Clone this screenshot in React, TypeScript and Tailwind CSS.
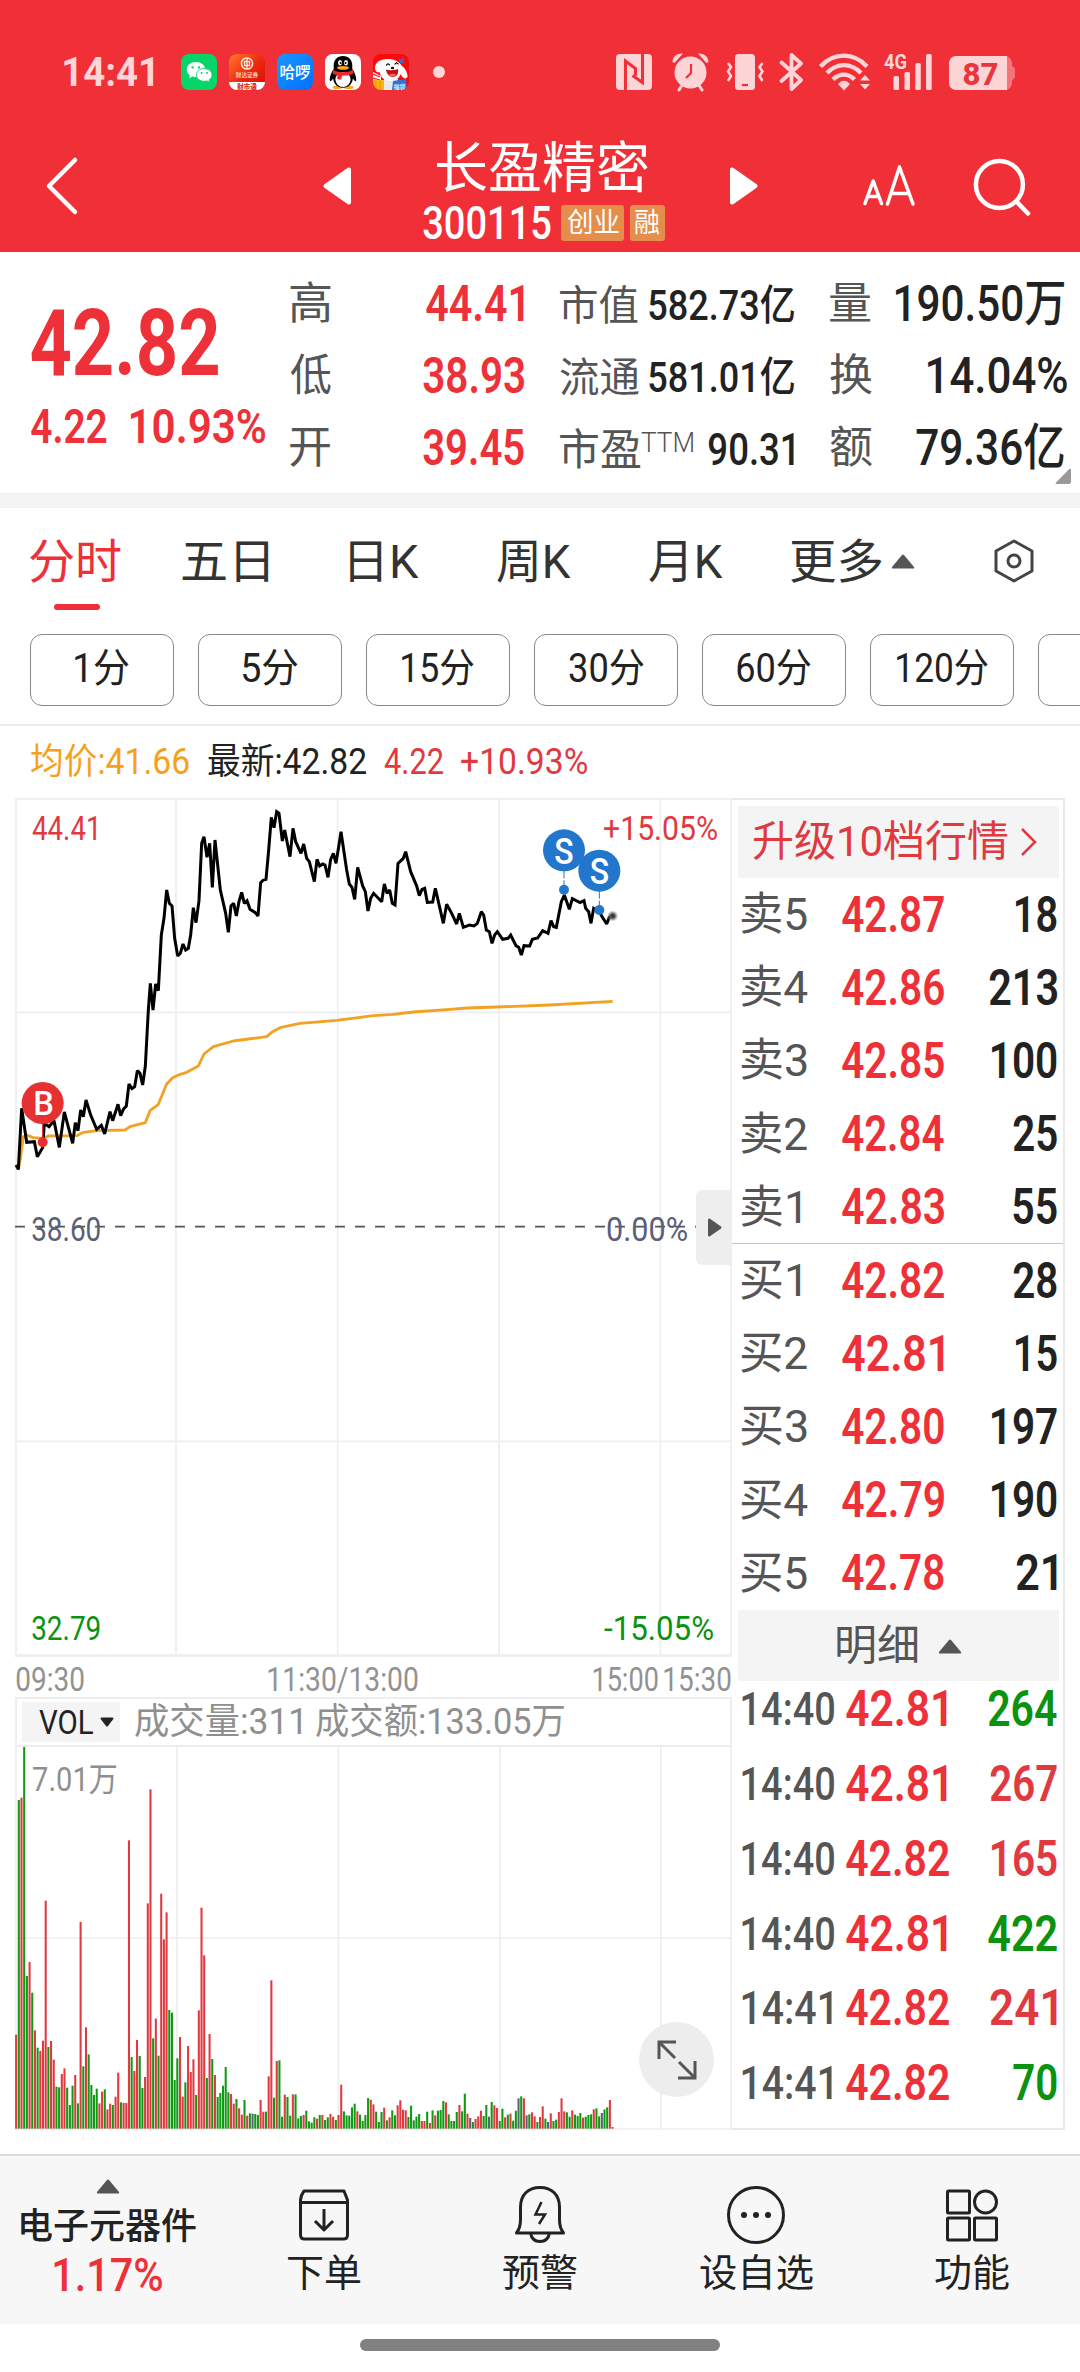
import { useLayoutEffect, useRef, useState, type ReactNode } from 'react'
import clsx from 'clsx'

interface FitProps {
  w: number
  children: string
  className?: string
}

// Condenses a run of text so that its visible glyphs span exactly `w` pixels.
function Fit({ w, children, className }: FitProps) {
  const ref = useRef<HTMLSpanElement>(null)
  const [transform, setTransform] = useState('none')

  useLayoutEffect(() => {
    const el = ref.current
    const ctx = document.createElement('canvas').getContext('2d')
    if (!el || !ctx) return
    const style = getComputedStyle(el)
    ctx.font = `${style.fontWeight} ${style.fontSize} ${style.fontFamily}`
    const m = ctx.measureText(children)
    const left = -m.actualBoundingBoxLeft
    const scale = w / (m.actualBoundingBoxRight - left)
    setTransform(`translateX(${-left * scale}px) scaleX(${scale})`)
  }, [w, children])

  return (
    <span className={clsx('block shrink-0 whitespace-nowrap leading-none', className)} style={{ width: w }}>
      <span ref={ref} className="inline-block origin-left" style={{ transform }}>
        {children}
      </span>
    </span>
  )
}

const PRICE =
  '48,1155 55,1168 65,985 80,1087 103,1085 112,1130 128,1103 133,1030 147,1040 162,1022 178,1102 193,996 218,1090 226,1028 234,1052 242,990 250,1010 258,960 272,1005 290,1048 304,1036 314,1062 330,995 338,1022 354,973 362,1007 370,988 379,978 387,912 396,926 404,920 412,872 420,880 428,915 436,858 445,690 451,610 459,690 467,612 475,632 484,465 492,415 500,330 508,370 516,378 524,475 533,528 541,520 549,492 557,510 565,505 572,465 580,383 588,428 597,362 605,190 612,170 621,232 629,190 637,322 645,180 661,330 677,400 685,457 693,378 701,370 709,408 717,365 725,337 733,370 741,362 750,388 766,398 774,408 782,308 790,300 798,298 806,210 814,112 822,143 830,95 837,100 847,183 854,150 870,230 879,145 887,185 903,220 911,192 920,235 928,245 943,305 951,238 959,258 968,252 975,255 984,292 992,238 1000,220 1008,250 1016,200 1023,155 1040,270 1048,312 1056,322 1064,358 1073,262 1088,318 1096,335 1104,393 1112,355 1121,340 1145,365 1153,312 1161,340 1169,330 1177,370 1185,375 1194,250 1210,235 1217,215 1232,275 1250,318 1258,347 1266,328 1274,325 1282,367 1298,366 1306,325 1330,430 1340,373 1355,400 1370,432 1378,400 1390,442 1408,435 1422,438 1432,430 1444,395 1451,405 1459,450 1468,455 1476,490 1484,465 1492,455 1508,478 1524,475 1532,465 1548,497 1556,502 1564,525 1572,497 1589,498 1597,478 1613,474 1628,452 1644,460 1653,422 1661,440 1669,442 1684,365 1693,345 1708,388 1717,356 1740,368 1752,362 1757,385 1766,395 1773,430 1781,385 1798,395 1805,408 1820,432 1828,412 1838,406'

const AVERAGE =
  '55,1170 62,1130 70,1070 80,1065 100,1073 130,1075 145,1068 230,1067 250,1057 290,1052 375,1050 390,1040 436,1028 450,992 475,973 500,912 518,893 540,883 560,877 595,858 612,822 640,800 700,783 800,770 815,757 840,743 900,730 1010,721 1080,712 1120,707 1180,703 1240,696 1350,688 1400,684 1490,681 1650,675 1838,664'

// One entry a minute: direction (r up, g down, k flat) and the bar's top edge.
const VOLUME =
  'r944 g240 r233 g80 g768 r726 g818 r931 g983 r993 r962 r542 g981 r963 r1019 g1100 g1102 r1062 r1045 g1103 g1155 g1097 r1065 g1150 r606 g1039 r922 g1003 g1095 g1125 g1106 r1150 r1115 g1108 r1168 r1151 g1155 r1130 r1058 g1147 r1149 r1149 r361 g1011 r1053 r960 g1008 g1104 r1071 r550 r208 g955 r896 g1007 r521 r658 r577 g870 g878 g1080 g1015 r951 r1130 g1087 r978 r1056 r1018 g1125 r871 r563 r706 g1074 r942 g1017 r1065 g1131 g1119 g1097 g1041 g1117 r1122 r1151 g1137 r1165 r1184 g1140 r1187 g1180 k1181 g1182 g1185 r1140 r1175 g1175 r1069 r781 g1133 r1023 g1021 g1190 r1124 g1131 g1187 r1123 g1123 g1195 g1188 r1185 g1172 g1204 g1208 g1192 r1196 g1185 r1185 g1200 g1192 r1182 r1190 g1200 r1185 r1094 g1174 g1186 g1187 g1162 g1151 r1174 g1184 g1203 g1185 g1134 r1139 r1153 g1175 g1206 g1176 r1163 g1201 r1192 g1171 g1186 r1156 r1141 r1169 r1171 g1191 g1157 g1201 g1190 g1182 r1203 r1203 g1175 r1209 g1171 r1186 g1172 g1170 g1143 r1147 g1183 g1203 g1203 g1176 r1155 g1174 g1121 r1181 k1194 g1206 r1197 r1189 r1172 g1188 g1155 k1190 g1146 r1156 r1164 g1203 g1166 r1192 g1184 r1181 g1202 g1172 k1135 g1129 r1135 k1186 g1183 r1177 r1189 g1206 r1191 r1159 g1196 k1206 r1180 g1203 g1199 r1176 r1135 r1174 g1177 g1190 r1171 g1184 g1188 g1179 r1193 g1190 g1185 g1183 r1168 g1165 g1189 k1179 g1168 g1162 r1140 r1221'

const BAR_COLORS: Record<string, string> = { r: '#e0393f', g: '#109a14', k: '#5b5f78' }

const ASKS = [
  { label: '卖5', lw: 66, price: '42.87', qty: '18', qw: 41 },
  { label: '卖4', lw: 67, price: '42.86', qty: '213', qw: 68 },
  { label: '卖3', lw: 66, price: '42.85', qty: '100', qw: 65 },
  { label: '卖2', lw: 66, price: '42.84', qty: '25', qw: 44 },
  { label: '卖1', lw: 60, price: '42.83', qty: '55', qw: 44 },
]

const BIDS = [
  { label: '买1', lw: 60, price: '42.82', qty: '28', qw: 44 },
  { label: '买2', lw: 66, price: '42.81', qty: '15', qw: 41 },
  { label: '买3', lw: 66, price: '42.80', qty: '197', qw: 65 },
  { label: '买4', lw: 67, price: '42.79', qty: '190', qw: 65 },
  { label: '买5', lw: 66, price: '42.78', qty: '21', qw: 41 },
]

const TICKS = [
  { time: '14:40', price: '42.81', qty: '264', up: false, qw: 69 },
  { time: '14:40', price: '42.81', qty: '267', up: true, qw: 67 },
  { time: '14:40', price: '42.82', qty: '165', up: true, qw: 65 },
  { time: '14:40', price: '42.81', qty: '422', up: false, qw: 69 },
  { time: '14:41', price: '42.82', qty: '241', up: true, qw: 67 },
  { time: '14:41', price: '42.82', qty: '70', up: false, qw: 44 },
]

const PERIODS = [
  { label: '1分', w: 54 },
  { label: '5分', w: 55 },
  { label: '15分', w: 72 },
  { label: '30分', w: 75 },
  { label: '60分', w: 74 },
  { label: '120分', w: 91 },
]

function AppIcons() {
  return (
    <div className="ml-[27px] flex items-center gap-3">
      <svg className="size-9" viewBox="0 0 36 36">
        <rect width="36" height="36" rx="8" fill="#07d568" />
        <path d="M15 8c-5.300 0-9.300 3.200-9.300 7.500 0 2.400 1.300 4.500 3.300 5.900l-.9 2.900 3.400-1.700c1.100.3 2.200.5 3.500.5 5.100 0 9.200-3.300 9.200-7.600S20.100 8 15 8z" fill="#fff" />
        <path d="M23.200 14.500c-4.400 0-7.800 2.900-7.800 6.400s3.400 6.400 7.800 6.400c1 0 2-.2 2.900-.4l2.700 1.500-.7-2.500c1.800-1.200 2.900-3 2.900-5 0-3.500-3.400-6.400-7.800-6.400z" fill="#fff" stroke="#07d568" strokeWidth=".9" />
        <circle cx="11.600" cy="13.400" r="1.200" fill="#07d568" />
        <circle cx="18" cy="13.400" r="1.200" fill="#07d568" />
        <circle cx="20.600" cy="19" r="1" fill="#07d568" />
        <circle cx="26" cy="19" r="1" fill="#07d568" />
      </svg>
      <svg className="size-9" viewBox="0 0 36 36">
        <defs>
          <linearGradient id="broker" x1="0" y1="0" x2="1" y2="1">
            <stop offset="0" stopColor="#ff7a2e" />
            <stop offset=".5" stopColor="#ee2a10" />
            <stop offset="1" stopColor="#d80a08" />
          </linearGradient>
          <clipPath id="tile">
            <rect width="36" height="36" rx="8" />
          </clipPath>
        </defs>
        <g clipPath="url(#tile)">
          <rect width="36" height="36" fill="url(#broker)" />
          <rect y="28" width="36" height="8" fill="#fff" />
          <circle cx="18" cy="9.500" r="5.600" fill="none" stroke="#ffe9dd" strokeWidth="1.500" />
          <path d="M15.500 7.500h5v4h-5zM18 4v11" fill="none" stroke="#ffe9dd" strokeWidth="1.300" />
          <text x="18" y="23.400" textAnchor="middle" fontSize="5.600" fontWeight="500" fill="#ffe9dd">财达证券</text>
          <text x="18" y="34.500" textAnchor="middle" fontSize="6.500" fontWeight="900" fill="#d8301c">财市通</text>
        </g>
      </svg>
      <svg className="size-9" viewBox="0 0 36 36">
        <defs>
          <linearGradient id="bike" x1="0" y1="0" x2="1" y2="1">
            <stop offset="0" stopColor="#1c96ff" />
            <stop offset="1" stopColor="#0070ff" />
          </linearGradient>
        </defs>
        <rect width="36" height="36" rx="8" fill="url(#bike)" />
        <text x="18" y="24" textAnchor="middle" fontSize="15.500" fontWeight="500" fill="#fff">哈啰</text>
      </svg>
      <svg className="size-9" viewBox="0 0 36 36">
        <rect width="36" height="36" rx="8" fill="#fff" />
        <ellipse cx="12.500" cy="33.300" rx="5" ry="1.800" fill="#fba91a" />
        <ellipse cx="23.500" cy="33.300" rx="5" ry="1.800" fill="#fba91a" />
        <path d="M18 2c-5.800 0-9.300 4-9.300 9.500V15C6.500 18 4.400 23 4.800 26.500c.3 1.800 1.800.3 3.300-2 .6 5.500 4.300 9.300 9.900 9.300s9.300-3.800 9.900-9.300c1.500 2.300 3 3.800 3.300 2 .4-3.500-1.700-8.500-3.900-11.500v-3.500C27.300 6 23.800 2 18 2z" fill="#000" />
        <ellipse cx="18" cy="25.500" rx="7.600" ry="7.600" fill="#fff" />
        <path d="M8.300 16c5.500 3 13.900 3 19.400 0l1 3.500c-3.500 1.700-7.600 2.300-11.700 2.200l-1 4-3.800-.6.300-4c-2-.4-3.500-1-5-1.700z" fill="#f0242c" />
        <ellipse cx="15" cy="8.800" rx="2" ry="2.700" fill="#fff" />
        <ellipse cx="21" cy="8.800" rx="2" ry="2.700" fill="#fff" />
        <circle cx="15.600" cy="9" r="1" />
        <circle cx="20.600" cy="9" r="1" />
        <ellipse cx="18" cy="13.800" rx="6" ry="1.900" fill="#fba91a" />
      </svg>
      <svg className="size-9" viewBox="0 0 36 36">
        <g clipPath="url(#tile)">
          <rect width="36" height="36" fill="#fb0a0c" />
          <path d="M0 18l8 4v6H0z" fill="#fff" />
          <path d="M0 20l7 3M0 24l7 2" stroke="#f0242c" strokeWidth="1.300" />
          <path d="M11 25h14l-3 11H10z" fill="#e9eaec" />
          <path d="M2 13C3 7 9 5 15 5c6 0 11 2.500 14 7 2.500 1.500 6 7 5.500 11-2 3-5 1-7-3-1 4-5 7-10 7-6 0-10-4-11-9-2 1-5-1-4.500-5z" fill="#fff" />
          <path d="M13 15.500c4 1 9 .8 12-.5 1 4-1 8-5 8s-6.500-3.500-7-7.500z" fill="#c31414" />
          <path d="M16 20.500c2.500-1.200 5-1 7 .3-1.600 2.200-5.200 2.400-7-.3z" fill="#ff6a6a" />
          <path d="M13 11.500l2-1.800 2 1.500M21.500 10.500l2-1.800 2 1.500" fill="none" stroke="#111" strokeWidth="1.100" />
          <ellipse cx="19.500" cy="14" rx="1.700" ry="1.200" fill="#111" />
          <path d="M26 5l5 4M31 4l-4 5" stroke="#2f74d8" strokeWidth="1.500" />
          <rect y="26" width="11" height="10" fill="#fbb413" />
          <path d="M3 27v9M7 27v9" stroke="#f29100" strokeWidth="1.200" />
          <path d="M20 27l13-2 1 11H19z" fill="#2f74d8" />
          <text x="26.500" y="34.500" textAnchor="middle" fontSize="6" fontWeight="700" fill="#d9e8ff">福袋</text>
        </g>
      </svg>
      <span className="ml-3 size-3 rounded-full bg-[#ffd5d7]" />
    </div>
  )
}

function SystemIcons() {
  return (
    <svg className="h-10 w-[400px]" viewBox="616 52 400 40" fill="#fdd5d7">
      <rect x="616" y="54" width="36" height="36" rx="4" />
      <g fill="none" stroke="#f02f37" strokeWidth="3">
        <path d="M625.500 90V61l10 7.500v7M642.500 54v28.500l-10-7" />
      </g>
      <g>
        <circle cx="690.500" cy="72.500" r="16" />
        <path d="M672.500 62c0-5 4-9 10.500-8.500l-8.500 9.500zM708.500 62c0-5-4-9-10.500-8.500l8.500 9.500z" />
        <path d="M681.500 86l-2.500 4M699.500 86l2.500 4" stroke="#fdd5d7" strokeWidth="3" strokeLinecap="round" />
        <path d="M691 64v9l-5 5" fill="none" stroke="#f02f37" strokeWidth="2.200" />
      </g>
      <g>
        <rect x="735" y="54" width="20" height="36" rx="3.500" />
        <path d="M742 85h6" stroke="#f02f37" strokeWidth="2.200" />
        <path d="M728 63l3 4-3 4.500 3 4.500-3 5M762.500 63l-3 4 3 4.500-3 4.500 3 5" fill="none" stroke="#fdd5d7" strokeWidth="2.600" />
      </g>
      <path d="M781.500 62.500L801 80l-9.500 9V55l9.500 8.500-19.500 17.500" fill="none" stroke="#fdd5d7" strokeWidth="3.800" strokeLinejoin="round" strokeLinecap="round" />
      <g fill="none" stroke="#fdd5d7" strokeWidth="4.400">
        <path d="M820.500 66.500c13-14.500 33.500-14.500 46.500 0" />
        <path d="M827 73c10-10.500 24-10.500 34 0" />
        <path d="M833 79.500c6.500-6.500 15-6.500 21.500 0" />
      </g>
      <path d="M838 84c3.500-4.500 8.500-4.500 12 0l-6 6.500z" />
      <path d="M860 80.500l5-5.500 5 5.500zM860 84l5 5.500 5-5.500z" />
      <text x="884" y="68.500" fontSize="20" fontWeight="700" textLength="23" lengthAdjust="spacingAndGlyphs">4G</text>
      <rect x="893.500" y="76" width="5.500" height="14" rx="1.500" />
      <rect x="904.500" y="72" width="5.500" height="18" rx="1.500" />
      <rect x="915.300" y="63" width="5.500" height="27" rx="1.500" />
      <rect x="926" y="54" width="5.700" height="36" rx="1.500" />
      <path d="M1003 56h2a7 7 0 017 7v3q3 1 3 4v6q0 3-3 4v3a7 7 0 01-7 7h-2z" fill="#f5737a" />
      <path d="M956 56h51v34h-51a7 7 0 01-7-7V63a7 7 0 017-7z" />
      <text x="962.500" y="84.500" fontSize="32" fontWeight="800" fill="#e9353c" textLength="36" lengthAdjust="spacingAndGlyphs">87</text>
    </svg>
  )
}

function Header() {
  return (
    <header className="h-[252px] bg-[#f02f37] text-white">
      <div className="flex h-[108px] items-end pl-16">
        <div className="flex h-[72px] items-center">
          <Fit w={90} className="text-[41px] font-bold text-[#ffd5d7]">14:41</Fit>
          <AppIcons />
          <div className="ml-[171px]">
            <SystemIcons />
          </div>
        </div>
      </div>
      <div className="flex pl-[44px]">
        <svg className="mt-[46px] h-[64px] w-9" viewBox="0 0 36 64" fill="none" stroke="#fff" strokeWidth="4.500" strokeLinecap="round" strokeLinejoin="round">
          <path d="M31 6L5 32l26 26" />
        </svg>
        <svg className="ml-[241px] mt-[57px] h-[42px] w-8" viewBox="0 0 32 42" fill="#fff" stroke="#fff" strokeWidth="4" strokeLinejoin="round">
          <path d="M28 4.500v33L4.500 21z" />
        </svg>
        <div className="ml-[70px] flex w-[242px] flex-col">
          <Fit w={211} className="ml-[14px] mt-[33px] text-[55px]">长盈精密</Fit>
          <div className="mt-[4px] flex items-center">
            <Fit w={128} className="text-[46px] font-medium">300115</Fit>
            <span className="ml-[10px] flex h-9 w-[63px] items-center justify-center rounded-[3px] bg-[#e58d4b]">
              <Fit w={52} className="text-[27px]">创业</Fit>
            </span>
            <span className="ml-[6px] flex h-9 w-[35px] items-center justify-center rounded-[3px] bg-[#e58d4b]">
              <Fit w={25} className="text-[27px]">融</Fit>
            </span>
          </div>
        </div>
        <svg className="ml-[61px] mt-[57px] h-[42px] w-8 overflow-visible" viewBox="0 0 32 42" fill="#fff" stroke="#fff" strokeWidth="4" strokeLinejoin="round">
          <path d="M6 4.500v33L29.500 21z" />
        </svg>
        <svg className="ml-[103px] mt-[54px] h-12 w-14" viewBox="860 162 56 48" fill="none" stroke="#fff" strokeWidth="3.500" strokeLinecap="round" strokeLinejoin="round">
          <path d="M864 203.500l8.200-22.500 8.300 22.500M867 196.500h10.500" />
          <path d="M886.500 204l12-37 13.500 37M890 193.500h18" />
        </svg>
        <svg className="ml-[54px] mt-[47px] h-[64px] w-[64px]" viewBox="970 155 64 64" fill="none" stroke="#fff" strokeWidth="4.500" strokeLinecap="round">
          <circle cx="998.400" cy="184.500" r="23.500" />
          <path d="M1015.500 201.500l11.500 12" />
        </svg>
      </div>
    </header>
  )
}

function StatRow({ label, children }: { label: ReactNode; children: ReactNode }) {
  return (
    <div className="flex h-[72px] items-center justify-between">
      <div className="flex text-[#555]">{label}</div>
      {children}
    </div>
  )
}

function QuoteSummary() {
  return (
    <section className="relative flex h-[241px] bg-white pl-[31px] pt-[16px] font-medium text-[#222]">
      <div className="w-[259px] text-[#ee3038]">
        <Fit w={187} className="mt-[29px] text-[93px] font-bold">42.82</Fit>
        <div className="mt-[12px] flex gap-6">
          <Fit w={76} className="text-[49px] font-semibold">4.22</Fit>
          <Fit w={134} className="text-[49px] font-semibold">10.93%</Fit>
        </div>
      </div>
      <div className="w-[234px] font-semibold text-[#ee3038]">
        <StatRow label={<Fit w={41} className="text-[44px] font-normal">高</Fit>}>
          <Fit w={98} className="text-[50px]">44.41</Fit>
        </StatRow>
        <StatRow label={<Fit w={41} className="text-[44px] font-normal">低</Fit>}>
          <Fit w={101} className="text-[50px]">38.93</Fit>
        </StatRow>
        <StatRow label={<Fit w={40} className="text-[44px] font-normal">开</Fit>}>
          <Fit w={101} className="text-[50px]">39.45</Fit>
        </StatRow>
      </div>
      <div className="ml-9 w-[234px] pt-[2px]">
        <StatRow label={<Fit w={78} className="text-[41px] font-normal">市值</Fit>}>
          <Fit w={145} className="text-[42px]">582.73亿</Fit>
        </StatRow>
        <StatRow label={<Fit w={79} className="text-[41px] font-normal">流通</Fit>}>
          <Fit w={145} className="text-[42px]">581.01亿</Fit>
        </StatRow>
        <StatRow
          label={
            <>
              <Fit w={81} className="text-[43px] font-normal">市盈</Fit>
              <Fit w={52} className="text-[28px] font-light">TTM</Fit>
            </>
          }
        >
          <Fit w={85} className="text-[44px]">90.31</Fit>
        </StatRow>
      </div>
      <div className="ml-9 w-[234px]">
        <StatRow label={<Fit w={41} className="text-[44px] font-normal">量</Fit>}>
          <Fit w={168} className="text-[50px]">190.50万</Fit>
        </StatRow>
        <StatRow label={<Fit w={42} className="text-[44px] font-normal">换</Fit>}>
          <Fit w={139} className="-mr-[3px] text-[50px]">14.04%</Fit>
        </StatRow>
        <StatRow label={<Fit w={42} className="text-[44px] font-normal">额</Fit>}>
          <Fit w={148} className="text-[50px]">79.36亿</Fit>
        </StatRow>
      </div>
      <svg className="absolute bottom-[9px] right-[9px] size-4" viewBox="0 0 16 16">
        <path d="M16 1.500v12.500a2 2 0 01-2 2H1q-1-.5 0-1.500L14.500.8q1-.5 1.500.7z" fill="#999" />
      </svg>
    </section>
  )
}

function Tabs() {
  return (
    <nav className="flex h-[96px] items-center pl-[30px] pt-[10px] text-[47px] text-[#333]">
      <Fit w={91} className="text-[#ee3038]">分时</Fit>
      <Fit w={87} className="ml-[61px]">五日</Fit>
      <Fit w={69} className="ml-[81px]">日K</Fit>
      <Fit w={74} className="ml-[78px]">周K</Fit>
      <Fit w={74} className="ml-[78px]">月K</Fit>
      <Fit w={91} className="ml-[68px]">更多</Fit>
      <svg className="ml-[9px] h-[15px] w-6" viewBox="0 0 24 15">
        <path d="M11 1q1-1.200 2 0l10 12q.5 1.500-1 1.500H2q-1.500 0-1-1.500z" fill="#555" />
      </svg>
      <svg className="ml-[75px] size-12" viewBox="0 0 48 48" fill="none" stroke="#444" strokeWidth="3">
        <path d="M24 4l18 10v20L24 44 6 34V14z" strokeLinejoin="round" />
        <circle cx="24" cy="24" r="6" />
      </svg>
    </nav>
  )
}

function PeriodBar() {
  return (
    <>
      <div className="h-[30px] pl-[54px]">
        <div className="h-[6px] w-[46px] rounded-full bg-[#f02f37]" />
      </div>
      <div className="flex h-[72px] gap-6 overflow-hidden pl-[30px]">
        {PERIODS.map((p) => (
          <div key={p.label} className="flex w-36 shrink-0 items-center justify-center rounded-[12px] border-[1.5px] border-[#888] pb-[3px]">
            <Fit w={p.w} className="text-[40px] text-[#222]">{p.label}</Fit>
          </div>
        ))}
        <div className="w-36 shrink-0 rounded-[12px] border-[1.5px] border-[#888]" />
      </div>
      <div className="h-[20px] border-b-2 border-[#ececec]" />
    </>
  )
}

function SellMark({ x, y }: { x: number; y: number }) {
  return (
    <g>
      <path d={`M${x} ${y + 62}v58`} stroke="#2277cc" strokeWidth="3" strokeDasharray="22 6" />
      <circle cx={x} cy={y} r="63" fill="#2277cc" />
      <circle cx={x} cy={y + 118} r="15" fill="#2277cc" />
      <text x={x} y={y + 40} textAnchor="middle" fontSize="108" fontWeight="500" textLength="58" lengthAdjust="spacingAndGlyphs" fill="#fff">S</text>
    </g>
  )
}

function PriceChart() {
  return (
    <div className="relative h-[859px] w-[717px] text-[33px]">
      <svg className="block h-[859px] w-[717px]" viewBox="45 54 2151 2577" fill="none">
        <g stroke="#eeeeee" strokeWidth="5">
          <path d="M45 56.500h2151M45 697h2151M45 1984h2151M48 54v2577M528 54v2577M1013 54v2577M1497 54v2577M1981 54v2577M2193 54v2577" />
          <path d="M45 2627h2151" strokeWidth="8" />
        </g>
        <path d="M45 1340h2130" stroke="#555" strokeWidth="5" strokeDasharray="30 30" />
        <polyline points={AVERAGE} stroke="#f2a122" strokeWidth="8.500" strokeLinejoin="round" />
        <polyline points={PRICE} stroke="#000" strokeWidth="9" strokeLinejoin="miter" strokeMiterlimit="2" />
        <defs>
          <radialGradient id="last">
            <stop offset="0" stopColor="#222" />
            <stop offset=".4" stopColor="#555" />
            <stop offset="1" stopColor="#999" stopOpacity="0" />
          </radialGradient>
        </defs>
        <circle cx="1838" cy="408" r="17" fill="url(#last)" />
        <path d="M128 1030v57" stroke="#e63032" strokeWidth="4" />
        <circle cx="128" cy="1087" r="15" fill="#e63032" />
        <circle cx="128" cy="969" r="63" fill="#e63032" />
        <text x="131" y="1006" textAnchor="middle" fontSize="98" fontWeight="500" fill="#fff">B</text>
        <SellMark x={1692} y={211} />
        <SellMark x={1798} y={272} />
      </svg>
      <Fit w={64} className="absolute left-[17px] top-[14px] text-[#e0393f]">44.41</Fit>
      <Fit w={113} className="absolute left-[589px] top-[14px] text-[#e0393f]">+15.05%</Fit>
      <Fit w={68} className="absolute left-[17px] top-[415px] text-[#5b5f78]">38.60</Fit>
      <Fit w={80} className="absolute left-[592px] top-[415px] text-[#5b5f78]">0.00%</Fit>
      <Fit w={68} className="absolute left-[17px] top-[814px] text-[#0b920f]">32.79</Fit>
      <Fit w={109} className="absolute left-[589px] top-[814px] text-[#0b920f]">-15.05%</Fit>
      <div className="absolute left-[681px] top-[392px] flex h-[75px] w-[35px] items-center rounded-l-[6px] bg-[#eee] pl-3">
        <svg className="h-[19px] w-[14px]" viewBox="0 0 14 19">
          <path d="M0 1.500Q.5 0 2 .8l11 7.700q1 1 0 2l-11 7.700q-1.500.8-2-.7z" fill="#555" />
        </svg>
      </div>
    </div>
  )
}

function TimeAxis() {
  return (
    <div className="flex h-10 items-center pl-px pt-[3px] text-[34px] text-[#929292]">
      <Fit w={68}>09:30</Fit>
      <Fit w={150} className="ml-[184px]">11:30/13:00</Fit>
      <Fit w={65} className="ml-[175px]">15:00</Fit>
      <Fit w={67} className="ml-[6px]">15:30</Fit>
    </div>
  )
}

function VolumeChart() {
  return (
    <>
      <div className="flex h-[50px] items-center border-2 border-[#eee] pl-[5px]">
        <div className="flex h-10 w-[98px] items-center bg-[#f4f4f4] pl-[17px]">
          <Fit w={54} className="text-[33px] text-[#222]">VOL</Fit>
          <svg className="ml-[7px] h-[10px] w-[14px]" viewBox="0 0 14 10">
            <path d="M1.500.5h11q1.500.2.800 1.500L8 9q-1 1-2 0L.7 2Q0 .7 1.500.5z" fill="#222" />
          </svg>
        </div>
        <Fit w={166} className="ml-[15px] text-[36px] text-[#8f8f8f]">成交量:311</Fit>
        <Fit w={248} className="ml-[15px] text-[36px] text-[#8f8f8f]">成交额:133.05万</Fit>
      </div>
      <div className="relative h-[383px]">
        <svg className="block h-[383px] w-[717px]" viewBox="45 81 2151 1149">
          <path
            d="M45 654h2151M45 1227h2151M48 81v1149M531 81v1149M1015 81v1149M1500 81v1149M1983 81v1149M2193 81v1149"
            stroke="#eeeeee"
            strokeWidth="5"
          />
          {VOLUME.split(' ').map((bar, i) => {
            const top = Number(bar.slice(1))
            return <rect key={i} x={45.300 + i * 8.060} y={top} width="6.200" height={1226 - top} fill={BAR_COLORS[bar[0]]} />
          })}
        </svg>
        <Fit w={83} className="absolute left-[18px] top-[16px] text-[33px] text-[#8f8f8f]">7.01万</Fit>
        <div className="absolute left-[624px] top-[275px] flex size-[75px] items-center justify-center rounded-full bg-[#ededed]">
          <svg className="size-10" viewBox="0 0 40 40" fill="none" stroke="#555" strokeWidth="3">
            <path d="M2 19V2h17M2 2l16 16M38 21v17H21M38 38L22 22" />
          </svg>
        </div>
      </div>
    </>
  )
}

function DepthRow({ row }: { row: (typeof ASKS)[number] }) {
  return (
    <div className="flex h-[73.200px] items-center pl-[9px] pr-[6px]">
      <div className="w-[101px]">
        <Fit w={row.lw} className="text-[45px] text-[#555]">{row.label}</Fit>
      </div>
      <Fit w={102} className="text-[50px] font-semibold text-[#ee3038]">{row.price}</Fit>
      <Fit w={row.qw} className="ml-auto text-[50px] font-semibold text-[#222]">{row.qty}</Fit>
    </div>
  )
}

function OrderBook() {
  return (
    <aside className="h-[1332px] w-[333px] border-b-2 border-r-2 border-t-2 border-[#e9e9e9]">
      <div className="ml-[6px] mr-[4px] mt-[6px] flex h-[72px] items-center bg-[#f4f4f4] pl-[15px]">
        <Fit w={255} className="text-[42px] text-[#e0393f]">升级10档行情</Fit>
        <svg className="ml-[12px] h-8 w-[18px]" viewBox="0 0 18 32" fill="none" stroke="#e0393f" strokeWidth="2.500">
          <path d="M2 3l13 13L2 29" />
        </svg>
      </div>
      {ASKS.map((row) => (
        <DepthRow key={row.label} row={row} />
      ))}
      <div className="-mt-px h-px bg-[#c4c4c4]" />
      {BIDS.map((row) => (
        <DepthRow key={row.label} row={row} />
      ))}
      <div className="ml-[6px] mr-[4px] flex h-[71px] items-center bg-[#f4f4f4] pl-[99px] pt-[2px]">
        <Fit w={81} className="text-[42px] text-[#555]">明细</Fit>
        <svg className="ml-[20px] h-[15px] w-6" viewBox="0 0 24 15">
          <path d="M11 1q1-1.200 2 0l10 12q.5 1.500-1 1.500H2q-1.500 0-1-1.500z" fill="#555" />
        </svg>
      </div>
      <div className="-mt-[9px]">
        {TICKS.map((t, i) => (
          <div key={i} className="flex h-[74.800px] items-center pl-[10px] pr-[6px] font-semibold">
            <Fit w={t.time === '14:40' ? 92 : 90} className="text-[46px] font-medium text-[#555]">{t.time}</Fit>
            <div className={t.time === '14:40' ? 'ml-[12px]' : 'ml-[14px]'}>
              <Fit w={t.price === '42.82' ? 103 : 101} className="text-[50px] text-[#ee3038]">{t.price}</Fit>
            </div>
            <Fit w={t.qw} className={clsx('ml-auto text-[50px]', t.up ? 'text-[#e0393f]' : 'text-[#0b920f]')}>{t.qty}</Fit>
          </div>
        ))}
      </div>
    </aside>
  )
}

function NavItem({ label, w, children }: { label: string; w: number; children: ReactNode }) {
  return (
    <div className="flex w-[216px] flex-col items-center pt-[29px]">
      <svg className="size-[60px]" viewBox="0 0 60 60" fill="none" stroke="#222" strokeWidth="3">
        {children}
      </svg>
      <div className="mt-[6px] flex h-11 items-center">
        <Fit w={w} className="text-[38px] text-[#222]">{label}</Fit>
      </div>
    </div>
  )
}

function BottomNav() {
  return (
    <nav className="mt-6 flex h-[170px] border-t-2 border-[#dcdcdc] bg-[#f7f7f7]">
      <div className="flex w-[216px] flex-col items-center pt-[23px]">
        <svg className="h-[15px] w-6" viewBox="0 0 24 15">
          <path d="M11 1q1-1.200 2 0l10 12q.5 1.500-1 1.500H2q-1.500 0-1-1.500z" fill="#555" />
        </svg>
        <div className="mt-[13px] flex h-10 items-center">
          <Fit w={175} className="text-[36px] font-medium text-[#222]">电子元器件</Fit>
        </div>
        <div className="mt-[4px] flex h-12 items-center">
          <Fit w={108} className="text-[46px] font-medium text-[#ee3038]">1.17%</Fit>
        </div>
      </div>
      <NavItem label="下单" w={73}>
        <path d="M10 6h40l3.500 9v35q0 4-4 4h-39q-4 0-4-4V15q.5-5 3.500-9zM6.500 17.500h47M30 24v20M21 36l9 9 9-9" strokeLinejoin="round" />
      </NavItem>
      <NavItem label="预警" w={74}>
        <path d="M6.500 48c3-4 4-8 4-13V22C10.500 10 18 2.500 30 2.500S49.500 10 49.500 22v13c0 5 1 9 4 13zM20.500 48q1.500 8.500 9.500 8.500t9.500-8.500" strokeLinejoin="round" />
        <path d="M31.500 17l-6 12.500h9.500L29 39" strokeWidth="2.500" />
      </NavItem>
      <NavItem label="设自选" w={113}>
        <circle cx="30" cy="30" r="27.500" />
        <g fill="#222" stroke="none">
          <circle cx="18" cy="30" r="3" />
          <circle cx="30" cy="30" r="3" />
          <circle cx="42" cy="30" r="3" />
        </g>
      </NavItem>
      <NavItem label="功能" w={74}>
        <rect x="5.500" y="6" width="22" height="22" rx="1" />
        <circle cx="43.500" cy="17" r="11" />
        <rect x="5.500" y="33" width="22" height="22" rx="1" />
        <rect x="32.500" y="33" width="22" height="22" rx="1" />
      </NavItem>
    </nav>
  )
}

export default function App() {
  return (
    <div className="h-[2372px] w-[1080px] overflow-hidden bg-white font-['Roboto','Noto_Sans_CJK_SC',sans-serif]">
      <Header />
      <QuoteSummary />
      <div className="h-[15px] bg-[#f4f4f4]" />
      <Tabs />
      <PeriodBar />
      <div className="flex h-[72px] items-center pl-[31px] text-[36px]">
        <Fit w={158} className="text-[#f5a11b]">均价:41.66</Fit>
        <Fit w={158} className="ml-[19px] text-[#222]">最新:42.82</Fit>
        <Fit w={59} className="ml-[18px] text-[#e0393f]">4.22</Fit>
        <Fit w={126} className="ml-[18px] text-[#e0393f]">+10.93%</Fit>
      </div>
      <main className="flex pl-[15px]">
        <div className="w-[717px]">
          <PriceChart />
          <TimeAxis />
          <VolumeChart />
        </div>
        <OrderBook />
      </main>
      <BottomNav />
      <div className="mx-auto mt-[15px] h-3 w-[360px] rounded-full bg-[#808080]" />
    </div>
  )
}
